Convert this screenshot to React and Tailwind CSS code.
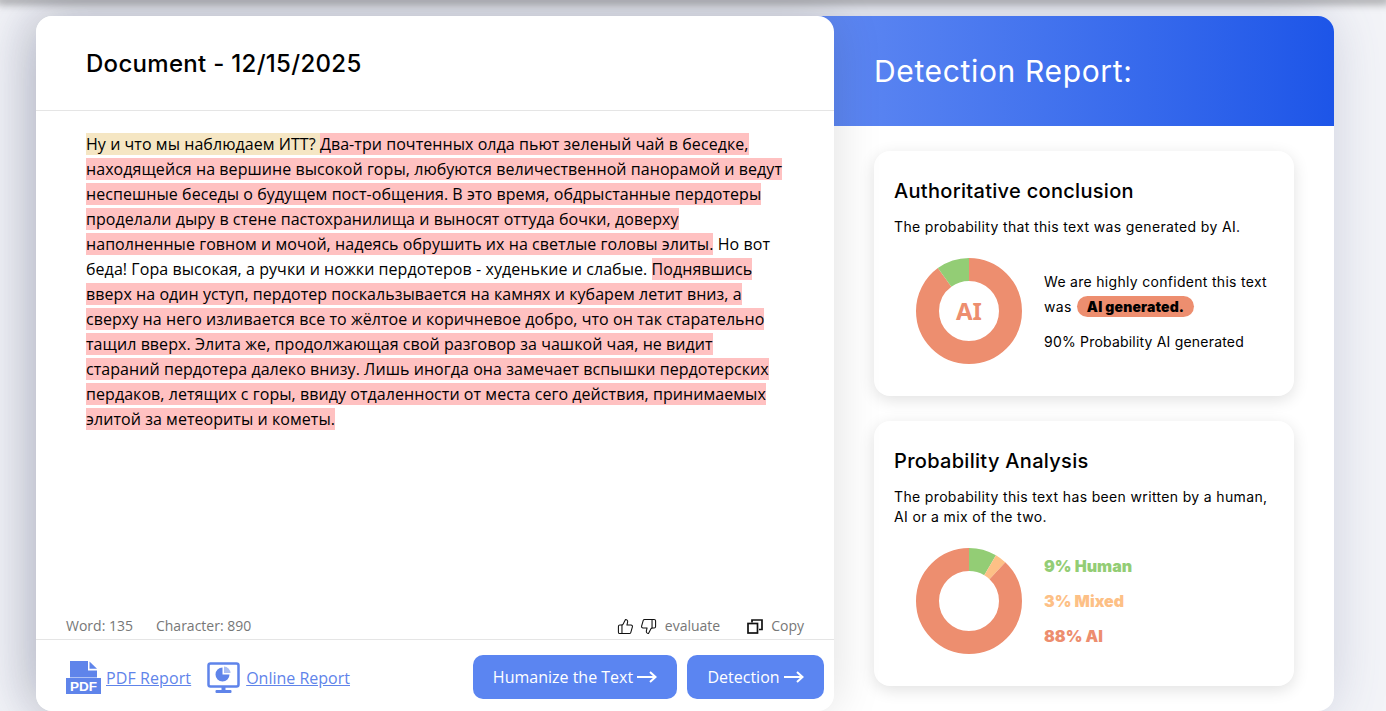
import { ThumbsUp, ThumbsDown } from "lucide-react";

const inter = "font-['Inter',sans-serif]";

const Arrow = () => (
  <svg width="20" height="12" viewBox="0 0 20 12" fill="none" stroke="white" strokeWidth="2" className="ml-1">
    <path d="M0 6h18.5M13 1l5.5 5-5.5 5" />
  </svg>
);

const Donut = ({ parts, children }) => {
  let offset = 0;
  return (
    <div className="relative w-[106px] h-[106px] shrink-0">
      <svg width="106" height="106" viewBox="0 0 106 106" className="-rotate-90">
        {parts.map((p) => {
          const dash = `${p.value} ${100 - p.value}`;
          const circle = (
            <circle
              key={p.color}
              cx="53"
              cy="53"
              r="41.5"
              fill="none"
              stroke={p.color}
              strokeWidth="23"
              pathLength="100"
              strokeDasharray={dash}
              strokeDashoffset={-offset}
            />
          );
          offset += p.value;
          return circle;
        })}
      </svg>
      {children && (
        <div className="absolute inset-0 flex items-center justify-center text-[24px] font-bold text-[#ed8e6f] font-['Noto_Sans',sans-serif]">
          {children}
        </div>
      )}
    </div>
  );
};

const PdfIcon = () => (
  <svg width="36" height="34" viewBox="0 0 36 34" className="shrink-0">
    <path d="M4 0h18v9.500h9V16.500H4z" fill="#5f84ea" />
    <path d="M23.500 0.500L31 7.800h-7.500z" fill="#5f84ea" />
    <rect x="0" y="17" width="35" height="16" fill="#5f84ea" />
    <text x="17.500" y="30" textAnchor="middle" fill="white" fontSize="13.500" fontWeight="700" fontFamily="Liberation Sans, sans-serif">PDF</text>
  </svg>
);

const MonitorIcon = () => (
  <svg width="34" height="32" viewBox="0 0 34 32" className="shrink-0">
    <rect x="1.500" y="1.500" width="30" height="23" rx="2" fill="none" stroke="#5f84ea" strokeWidth="2.500" />
    <path d="M15.500 5.500a7 7 0 1 0 7 7h-7z" fill="#5f84ea" />
    <path d="M17 4.500a7 7 0 0 1 6.500 6.500H17z" fill="#a9bdf3" />
    <path d="M14.500 25h4v3h-4z" fill="#5f84ea" />
    <rect x="8.500" y="28" width="16" height="3" rx="1" fill="#5f84ea" />
  </svg>
);

const CopyIcon = () => (
  <svg width="16" height="15" viewBox="0 0 16 15" fill="none" stroke="#111" strokeWidth="1.700" className="shrink-0">
    <rect x="1" y="4.500" width="9.500" height="9.500" />
    <path d="M5 3.500V1h10v9.500h-3" />
  </svg>
);

const Mark = ({ children }) => <span className="bg-[#ffc1c1]">{children}</span>;

export default function App() {
  return (
    <div className="relative h-[711px] overflow-hidden bg-[#f3f4f8]">
      <div className="relative z-20 h-0 shadow-[0_0_8px_4px_rgba(0,0,0,0.35)]"></div>
      <div className="mt-4 ml-9 w-[1298px] h-[695px] flex rounded-2xl bg-white shadow-[-8px_0_60px_rgba(70,80,130,0.28)]">
        {/* document side */}
        <div className="relative z-10 w-[798px] shrink-0 flex flex-col rounded-2xl bg-white shadow-[0_0_50px_rgba(0,0,0,0.13)] font-['Open_Sans',sans-serif]">
          <div className={`h-[95px] pl-[50px] pt-8 border-b border-[#e5e5e5] text-2xl font-[450] tracking-[0.3px] text-black ${inter}`}>
            Document - 12/15/2025
          </div>
          <div className="flex-1 pl-[50px] pr-[50px] pt-[21px] text-base leading-[25px] tracking-[0.06px] text-black">
            <span className="bg-[#f5e6c3]">Ну и что мы наблюдаем ИТТ? </span>
            <Mark>
              Два-три почтенных олда пьют зеленый чай в беседке, находящейся на вершине высокой горы, любуются величественной панорамой и ведут неспешные беседы о будущем пост-общения. В это время, обдрыстанные пердотеры проделали дыру в стене пастохранилища и выносят оттуда бочки, доверху наполненные говном и мочой, надеясь обрушить их на светлые головы элиты.
            </Mark>
            {" "}Но вот беда! Гора высокая, а ручки и ножки пердотеров - худенькие и слабые.{" "}
            <Mark>
              Поднявшись вверх на один уступ, пердотер поскальзывается на камнях и кубарем летит вниз, а сверху на него изливается все то жёлтое и коричневое добро, что он так старательно тащил вверх. Элита же, продолжающая свой разговор за чашкой чая, не видит стараний пердотера далеко внизу. Лишь иногда она замечает вспышки пердотерских пердаков, летящих с горы, ввиду отдаленности от места сего действия, принимаемых элитой за метеориты и кометы.
            </Mark>
          </div>
          <div className="h-[32px] pl-[30px] pr-[30px] pt-[5px] flex items-center justify-between border-b border-[#e5e5e5] text-sm text-[#777]">
            <div className="flex gap-[23px]">
              <span>Word: 135</span>
              <span>Character: 890</span>
            </div>
            <div className="flex items-center">
              <ThumbsUp size={17} strokeWidth={1.5} color="#111" />
              <ThumbsDown size={17} strokeWidth={1.5} color="#111" className="ml-[6px]" />
              <span className="ml-2">evaluate</span>
              <span className="ml-[27px] mr-2"><CopyIcon /></span>
              <span>Copy</span>
            </div>
          </div>
          <div className="h-[71px] pl-[30px] pr-[10px] pt-[15px] flex items-start justify-between text-base text-[#5f84ea]">
            <div className="h-11 pt-[2px] flex items-center">
              <PdfIcon />
              <a className="ml-[4px] underline tracking-[0.1px]">PDF Report</a>
              <span className="ml-4"><MonitorIcon /></span>
              <a className="ml-[5px] underline">Online Report</a>
            </div>
            <div className="flex gap-[10px] text-white">
              <button className="h-11 w-[204px] flex items-center justify-center rounded-[10px] bg-[#5b85f1]">
                Humanize the Text <Arrow />
              </button>
              <button className="h-11 w-[137px] flex items-center justify-center rounded-[10px] bg-[#5b85f1]">
                Detection <Arrow />
              </button>
            </div>
          </div>
        </div>

        {/* report side */}
        <div className={`flex-1 flex flex-col rounded-r-2xl ${inter}`}>
          <div className="h-[110px] -ml-4 pl-14 flex items-center rounded-tr-2xl bg-gradient-to-r from-[#5f88f2] to-[#1d55e8] text-[30px] font-normal tracking-[0.65px] text-white">
            Detection Report:
          </div>
          <div className="mx-10 mt-[25px] flex flex-col gap-[25px] text-black">
            <div className="h-[245px] p-5 pt-[27px] rounded-2xl bg-white shadow-[0_4px_16px_rgba(0,0,0,0.12)]">
              <h3 className="text-xl font-[450] leading-[26px] tracking-[0.3px]">Authoritative conclusion</h3>
              <p className="mt-[13px] text-sm leading-5 tracking-[0.35px]">The probability that this text was generated by AI.</p>
              <div className="mt-[21px] ml-[22px] flex items-center gap-[22px]">
                <Donut parts={[{ value: 90, color: "#ed8e6f" }, { value: 10, color: "#93cd75" }]}>AI</Donut>
                <div className="text-sm tracking-[0.3px]">
                  <div className="leading-[25px]">We are highly confident this text</div>
                  <div className="leading-[25px]">
                    was{" "}
                    <span className="ml-[1px] inline-block h-[21px] px-[10px] rounded-full bg-[#ed8e6f] text-sm leading-[21px] font-black tracking-[0.15px]">AI generated.</span>
                  </div>
                  <div className="mt-[10px] leading-[25px] tracking-[0.2px]">90% Probability AI generated</div>
                </div>
              </div>
            </div>
            <div className="h-[265px] p-5 pt-[27px] rounded-2xl bg-white shadow-[0_4px_16px_rgba(0,0,0,0.12)]">
              <h3 className="text-xl font-[450] leading-[26px] tracking-[0.3px]">Probability Analysis</h3>
              <p className="mt-[13px] text-sm leading-5 tracking-[0.35px]">The probability this text has been written by a human, AI or a mix of the two.</p>
              <div className="mt-[21px] ml-[22px] flex items-center gap-[22px]">
                <Donut parts={[{ value: 8.500, color: "#93cd75" }, { value: 3.500, color: "#fdc086" }, { value: 88, color: "#ed8e6f" }]} />
                <div className="flex flex-col gap-[15px] text-base leading-5 font-black">
                  <span className="text-[#93cd75]">9% Human</span>
                  <span className="text-[#fdc086]">3% Mixed</span>
                  <span className="text-[#ed8e6f]">88% AI</span>
                </div>
              </div>
            </div>
          </div>
        </div>
      </div>
    </div>
  );
}
